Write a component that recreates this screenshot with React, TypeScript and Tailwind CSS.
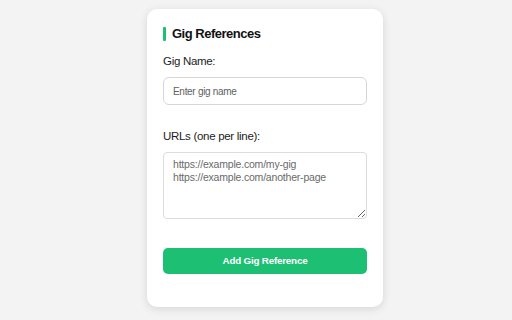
export default function App() {
  return (
    <div className="w-[512px] h-[320px] bg-[#f3f3f3] font-['Liberation_Sans',sans-serif] text-[#1c1c1c] overflow-hidden">
      <div className="ml-[147px] pt-[9px] w-[236px]">
        <div className="bg-white rounded-[10px] shadow-[0_2px_8px_rgba(0,0,0,0.12)] px-4 pt-[16px] pb-[33px]">
          <h2 className="flex items-center gap-[6px] text-[13px] tracking-[-0.5px] font-bold leading-[18px] text-[#111]">
            <span className="w-[3px] h-[14px] bg-[#1dbf73] rounded-[1px]" />
            Gig References
          </h2>
          <label className="block mt-[9px] text-[11.5px] tracking-[-0.3px] leading-[18px]">Gig Name:</label>
          <input
            className="block mt-[7px] w-full h-[28px] rounded-[6px] border border-[#d6d6d6] px-[9px] text-[10px] tracking-[-0.3px] placeholder:text-[#5f5f5f] outline-none"
            placeholder="Enter gig name"
          />
          <label className="block mt-[22px] text-[11.5px] tracking-[-0.3px] leading-[18px]">URLs (one per line):</label>
          <textarea
            className="block mt-[7px] w-full h-[67px] rounded-[4px] border border-[#dcdcdc] px-[9px] pt-[5px] text-[10.5px] tracking-[-0.2px] leading-[13px] placeholder:text-[#6a6a6a] outline-none"
            placeholder={"https://example.com/my-gig\nhttps://example.com/another-page"}
          />
          <button className="block mt-[29px] w-full h-[26px] rounded-[5px] bg-[#1dbf73] text-white text-[9.8px] tracking-[-0.2px] font-bold">
            Add Gig Reference
          </button>
        </div>
      </div>
    </div>
  );
}
